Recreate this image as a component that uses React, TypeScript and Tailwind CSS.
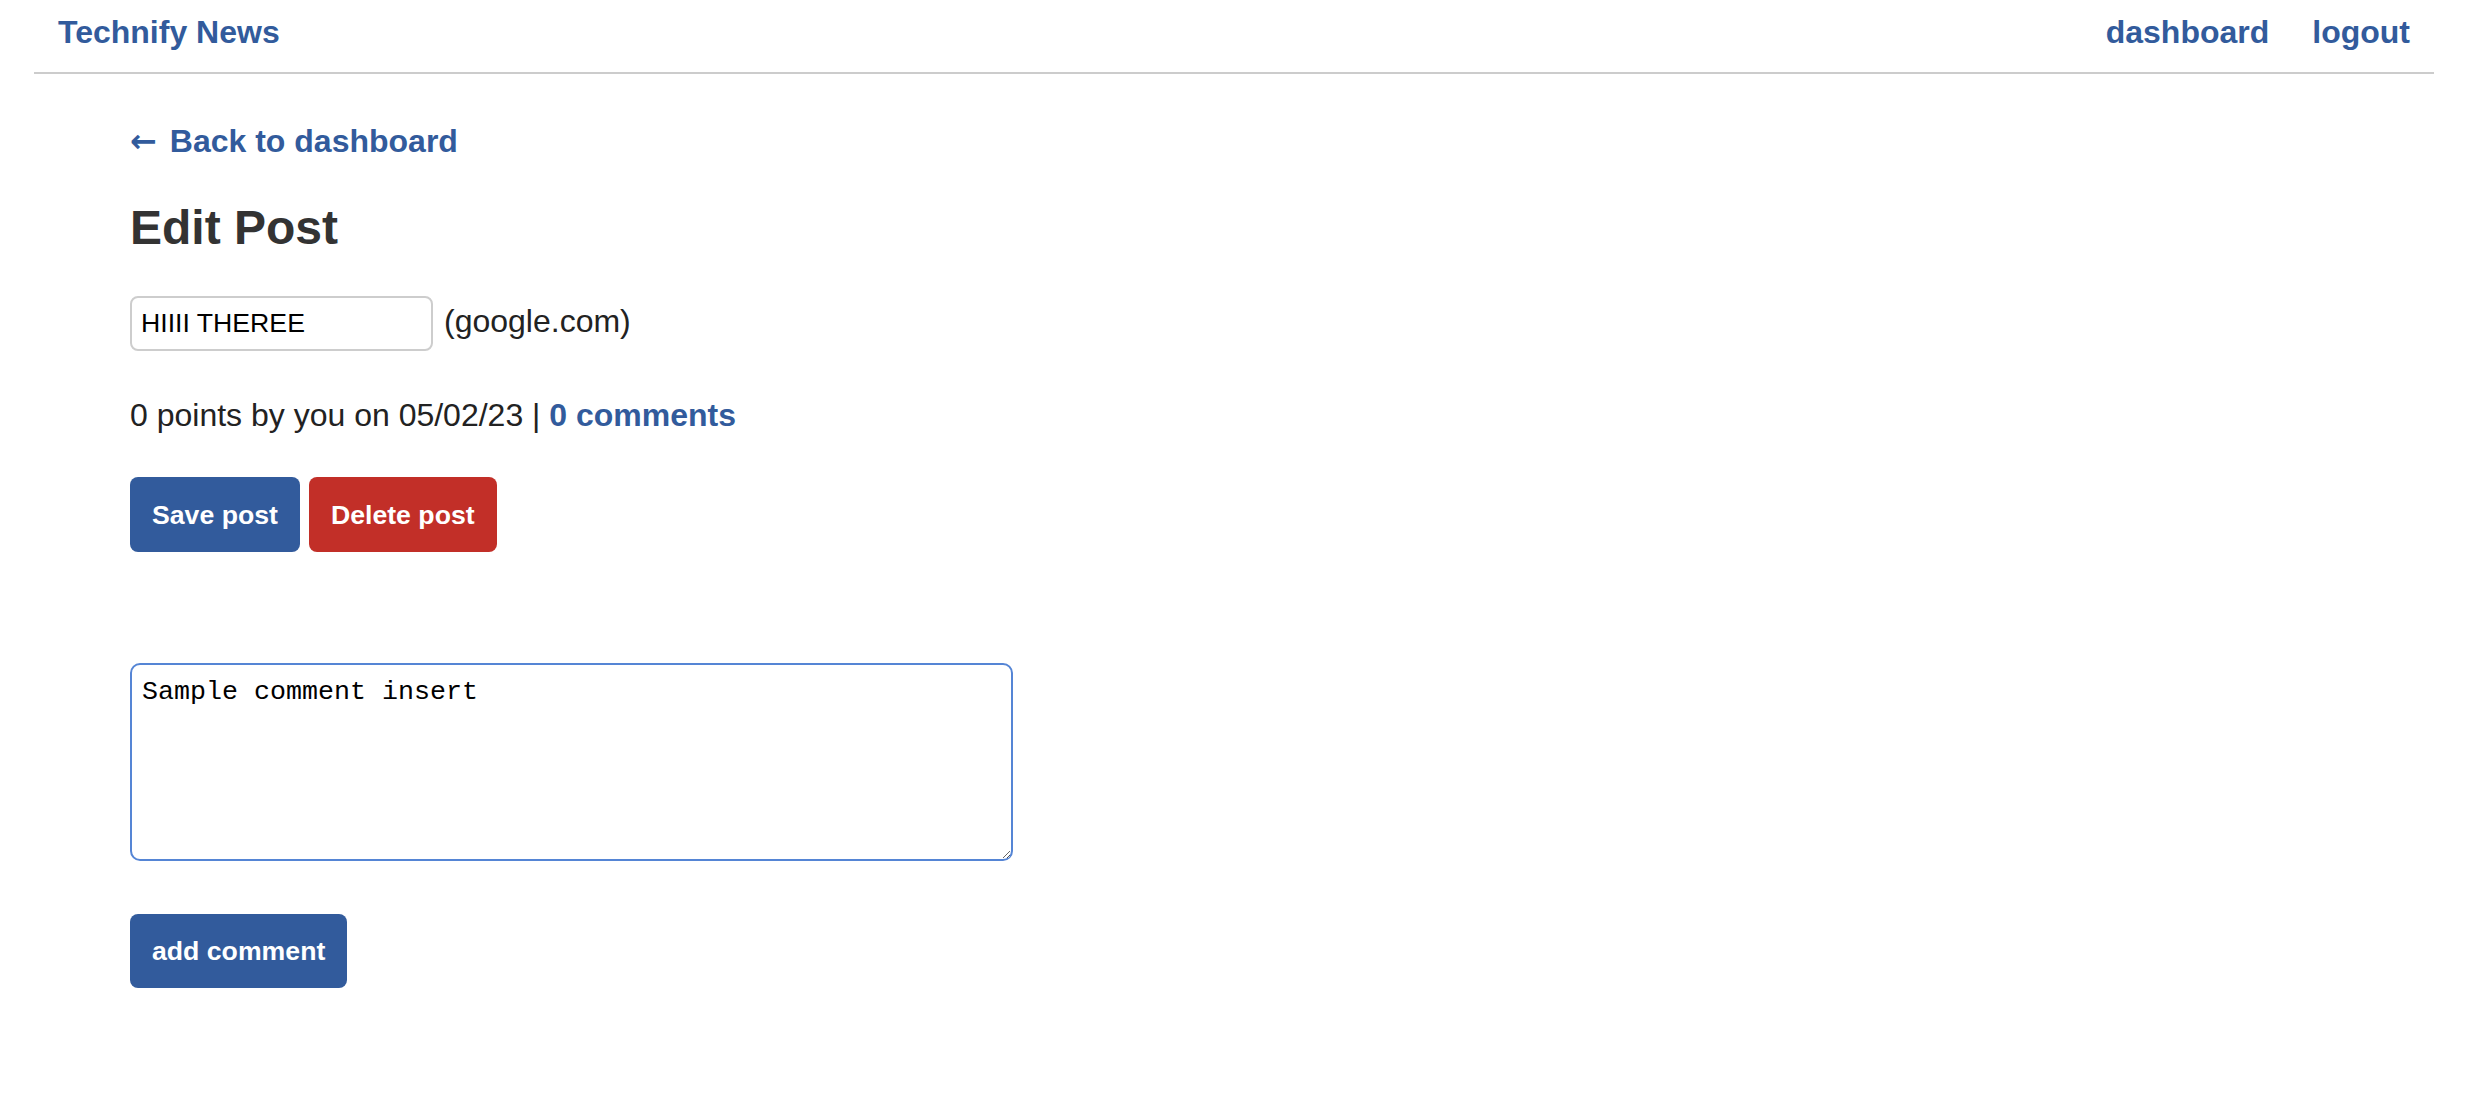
const sans = { fontFamily: '"Liberation Sans", Arial, Helvetica, sans-serif' };

const App = () => {
  return (
    <div className="min-h-screen bg-white font-['Liberation_Sans',Arial,sans-serif] text-[#333]">
      {/* Top nav */}
      <header className="ml-[34px] mr-[52px] flex items-baseline justify-between border-b-2 border-[#cccccc] px-[24px] pt-[14px] pb-[22px]">
        <a href="#" className="text-[32px] leading-[36px] font-bold text-[#325b9c]">
          Technify News
        </a>
        <nav className="flex items-baseline gap-[43px] text-[32px] leading-[36px] font-bold text-[#325b9c]">
          <a href="#">dashboard</a>
          <a href="#">logout</a>
        </nav>
      </header>

      <main className="pl-[130px]">
        <a href="#" className="mt-[49px] block w-fit text-[32px] leading-[36px] font-bold text-[#325b9c]">
          <span className="mr-[13px] font-['DejaVu_Sans',sans-serif] font-bold">←</span>Back to dashboard
        </a>

        <h2 className="mt-[41px] text-[48px] leading-[56px] font-bold text-[#333]">Edit Post</h2>

        {/* Title + url */}
        <div className="mt-[40px] flex items-baseline">
          <input
            type="text"
            defaultValue="HIIII THEREE"
            className="h-[55px] w-[303px] rounded-lg border-2 border-[#cdcdcd] bg-white pl-[9px] text-[26.67px] text-black outline-none"
            style={sans}
          />
          <span className="ml-[11px] text-[32px] leading-[36px] text-[#222]">(google.com)</span>
        </div>

        <p className="mt-[46px] text-[32px] leading-[36px] text-[#222]">
          0 points by you on 05/02/23 |{" "}
          <a href="#" className="font-bold text-[#325b9c]">
            0 comments
          </a>
        </p>

        {/* Post actions */}
        <div className="mt-[44px] flex gap-[9px]">
          <button className="flex h-[75px] items-center rounded-lg bg-[#325b9c] px-[22px] text-[26.67px] font-bold text-white">
            Save post
          </button>
          <button className="flex h-[75px] items-center rounded-lg bg-[#c22f28] px-[22px] text-[26.67px] font-bold text-white">
            Delete post
          </button>
        </div>

        {/* Comment box */}
        <textarea
          defaultValue="Sample comment insert"
          className="mt-[111px] block h-[198px] w-[883px] rounded-[10px] border-2 border-[#5585d5] bg-white pt-[12px] pl-[10px] pr-[10px] font-['Liberation_Mono',monospace] text-[26.67px] leading-[30px] text-black outline-none"
        />

        <button className="mt-[53px] flex h-[74px] items-center rounded-lg bg-[#325b9c] px-[22px] text-[26.67px] font-bold text-white">
          add comment
        </button>
      </main>
    </div>
  );
};

export default App;
